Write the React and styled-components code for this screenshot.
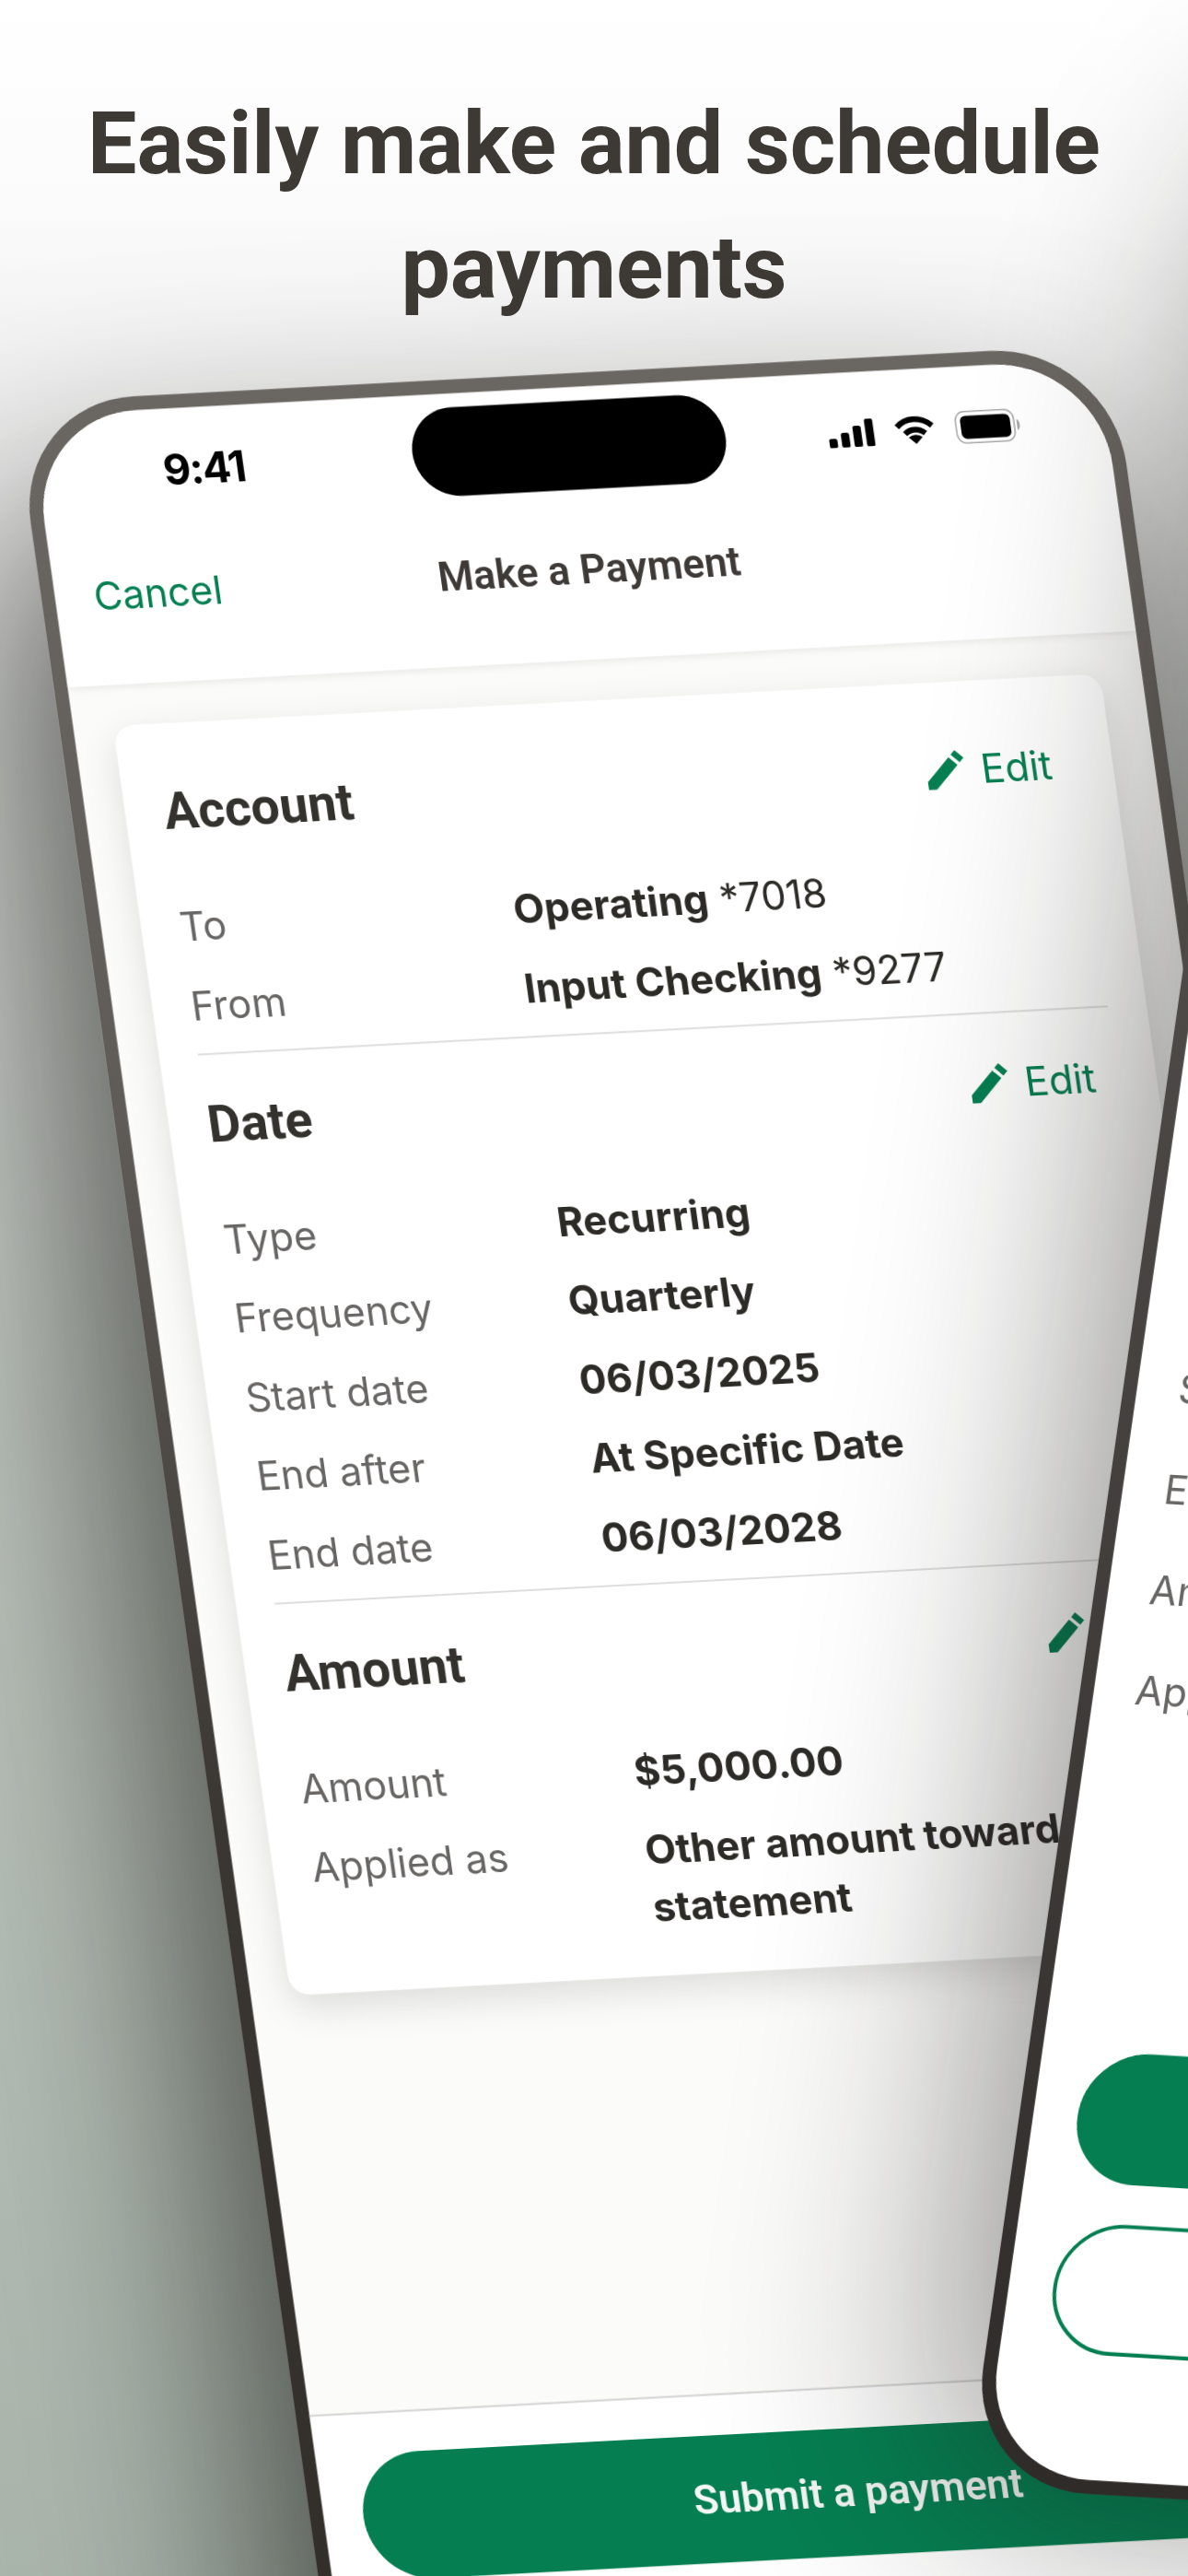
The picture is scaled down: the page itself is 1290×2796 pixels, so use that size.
import React from "react";
import styled, { createGlobalStyle } from "styled-components";

const GlobalStyle = createGlobalStyle`
  html, body {
    margin: 0;
    padding: 0;
    background: #fff;
  }
  * {
    box-sizing: border-box;
  }
`;

const green = "#057f52";
const sans = `Inter, "Noto Sans", sans-serif`;
const display = `Roboto, Inter, sans-serif`;

const Page = styled.div`
  position: relative;
  width: 1290px;
  height: 2796px;
  overflow: hidden;
  background: linear-gradient(180deg, #fff 0%, #fbfbfb 8%, #e6e7e6 22%, #bfc6bf 55%, #a9b4ab 100%);
  font-family: ${sans};
`;

const Title = styled.h1`
  margin: 0;
  height: 437px;
  padding: 88px 40px 0;
  text-align: center;
  font-family: ${display};
  font-size: 95px;
  line-height: 135px;
  font-weight: 700;
  color: #3d3a35;
`;

const Frame = styled.div`
  width: 1190px;
  height: 2580px;
  padding: 15px;
  border-radius: 130px;
  transform-origin: 0 0;
  display: flex;
  will-change: transform;
`;

const MainFrame = styled(Frame)`
  margin-left: 15px;
  transform: matrix(1, -0.053, 0.14, 1, 0, 0);
  background: linear-gradient(180deg, #6a6662 0%, #5f5b57 30%, #3a3632 60%, #302d29 100%);
  box-shadow: -45px 130px 240px rgba(15, 15, 10, 0.66);
`;

const SideFrame = styled(Frame)`
  position: absolute;
  left: 1418px;
  top: 119px;
  transform: matrix(1, 0.06, -0.143, 1, 0, 0);
  background: linear-gradient(180deg, #5e5a57 0%, #3e3a37 70%, #2e2b28 100%);
  box-shadow: -30px 10px 280px rgba(20, 18, 15, 0.48);
`;

const Screen = styled.div`
  position: relative;
  flex: 1;
  display: flex;
  flex-direction: column;
  border-radius: 116px;
  overflow: hidden;
  background: #fbfbfa;
`;

const Header = styled.header`
  height: 295px;
  flex: none;
  background: #fff;
  box-shadow: 0 2px 10px rgba(0, 0, 0, 0.1);
  z-index: 1;
`;

const StatusBar = styled.div`
  height: 132px;
  padding: 0 92px 0 136px;
  display: flex;
  align-items: center;
  justify-content: space-between;
`;

const Clock = styled.span`
  font-size: 46px;
  font-weight: 700;
  letter-spacing: -1.5px;
  color: #000;
`;

const Island = styled.div`
  position: absolute;
  top: 15px;
  left: 407px;
  width: 340px;
  height: 96px;
  border-radius: 48px;
  background: #000;
  z-index: 2;
`;

const StatusIcons = styled.div`
  display: flex;
  align-items: center;
  gap: 22px;
`;

const NavBar = styled.div`
  margin-top: 22px;
  height: 88px;
  padding: 0 42px;
  display: grid;
  grid-template-columns: 1fr auto 1fr;
  align-items: center;
`;

const NavLink = styled.span`
  font-size: 42.5px;
  color: ${green};
`;

const NavTitle = styled.span`
  font-family: ${display};
  font-size: 44px;
  font-weight: 600;
  color: #3d3a38;
`;

const Content = styled.main`
  flex: 1;
  padding: 44px 43px 0;
`;

const Card = styled.section`
  width: 1072px;
  padding: 65px 42px 50px;
  border-radius: 22px;
  background: #fff;
  box-shadow: 0 14px 40px rgba(0, 0, 0, 0.12);
`;

const Block = styled.div`
  padding: 45px 0 27px;
  border-bottom: 2px solid #dedede;

  &:first-child {
    padding-top: 0;
  }
  &:last-child {
    padding-bottom: 0;
    border-bottom: 0;
  }
`;

const BlockHead = styled.div`
  height: 60px;
  margin-bottom: 70px;
  display: flex;
  align-items: center;
  justify-content: space-between;
`;

const BlockTitle = styled.h2`
  margin: 0;
  font-family: ${display};
  font-size: 55px;
  font-weight: 700;
  color: #34322e;
`;

const EditLink = styled.span`
  display: flex;
  align-items: center;
  gap: 17px;
  margin-right: 24px;
  font-size: 43px;
  color: ${green};
`;

const Rows = styled.div`
  display: flex;
  flex-direction: column;
  gap: 35.5px;
`;

const Row = styled.div`
  display: grid;
  grid-template-columns: 362px 1fr;
  min-height: 50px;
  line-height: 50px;
`;

const Label = styled.span`
  font-size: 43px;
  color: #686664;
`;

const Value = styled.span`
  font-size: 43.5px;
  line-height: 62px;
  margin: -6px 0;
  font-weight: 700;
  color: #2d2b28;

  em {
    font-style: normal;
    font-weight: 400;
    font-size: 43px;
  }
`;

const Footer = styled.footer`
  flex: none;
  height: 380px;
  padding: 43px 43px 0;
  background: #fff;
  border-top: 2px solid #d2d2d2;
`;

const SubmitButton = styled.div`
  height: 138px;
  border-radius: 69px;
  background: ${green};
  display: flex;
  align-items: center;
  justify-content: center;
  font-family: ${display};
  font-size: 44px;
  font-weight: 600;
  color: #f4f7f5;
`;

const SideScreen = styled(Screen)`
  background: #fff;
  padding: 0 48px 135px;
  justify-content: flex-end;
`;

const SideRows = styled.div`
  display: flex;
  flex-direction: column;
  gap: 59px;
  margin: 0 0 324px -3px;
`;

const SideLabel = styled(Label)`
  line-height: 50px;
`;

const Pill = styled.div`
  height: 142px;
  border-radius: 71px;
  margin-top: 43px;
  border: 4px solid ${green};
  background: ${(p) => (p.$filled ? green : "#fff")};
`;

const PencilIcon = () => (
  <svg width="42" height="42" viewBox="3 3 18 18" fill={green}>
    <path d="M3 17.25V21h3.75L17.81 9.94l-3.75-3.75L3 17.25zM15.2 5.05l3.75 3.75 2.05-2.05-3.75-3.75z" />
  </svg>
);

const SignalIcon = () => (
  <svg width="50" height="30" viewBox="0 0 50 30" fill="#000">
    <rect x="0" y="20" width="9" height="10" rx="2.5" />
    <rect x="13.5" y="14" width="9" height="16" rx="2.5" />
    <rect x="27" y="7" width="9" height="23" rx="2.5" />
    <rect x="40.5" y="0" width="9" height="30" rx="2.5" />
  </svg>
);

const WifiIcon = () => (
  <svg width="44" height="30" viewBox="0 0 44 30" fill="none" stroke="#000" strokeWidth="6">
    <path d="M3 11 A 27 27 0 0 1 41 11" />
    <path d="M11 19 A 16 16 0 0 1 33 19" />
    <path d="M22 30 L14.5 23 A 11 11 0 0 1 29.5 23 Z" fill="#000" stroke="none" />
  </svg>
);

const BatteryIcon = () => (
  <svg width="72" height="36" viewBox="0 0 72 36" fill="none">
    <rect x="1" y="1" width="63" height="34" rx="10" stroke="#a8a8a8" strokeWidth="1.5" />
    <rect x="6" y="5.5" width="54" height="25" rx="6" fill="#000" />
    <path d="M67 12 C 71 13 71 23 67 24 Z" fill="#a8a8a8" />
  </svg>
);

const accountRows = [
  ["To", "Operating", "*7018"],
  ["From", "Input Checking", "*9277"],
];

const dateRows = [
  ["Type", "Recurring"],
  ["Frequency", "Quarterly"],
  ["Start date", "06/03/2025"],
  ["End after", "At Specific Date"],
  ["End date", "06/03/2028"],
];

const amountRows = [
  ["Amount", "$5,000.00"],
  ["Applied as", "Other amount towards statement"],
];

const sideLabels = ["Start date", "End date", "Amount", "Applied as"];

const DetailBlock = ({ title, rows }) => (
  <Block>
    <BlockHead>
      <BlockTitle>{title}</BlockTitle>
      <EditLink>
        <PencilIcon />
        Edit
      </EditLink>
    </BlockHead>
    <Rows>
      {rows.map(([label, value, suffix]) => (
        <Row key={label}>
          <Label>{label}</Label>
          <Value>
            {value}
            {suffix && <em> {suffix}</em>}
          </Value>
        </Row>
      ))}
    </Rows>
  </Block>
);

const App = () => (
  <Page>
    <GlobalStyle />
    <Title>
      Easily make and schedule
      <br />
      payments
    </Title>
    <MainFrame>
      <Screen>
        <Island />
        <Header>
          <StatusBar>
            <Clock>9:41</Clock>
            <StatusIcons>
              <SignalIcon />
              <WifiIcon />
              <BatteryIcon />
            </StatusIcons>
          </StatusBar>
          <NavBar>
            <NavLink>Cancel</NavLink>
            <NavTitle>Make a Payment</NavTitle>
          </NavBar>
        </Header>
        <Content>
          <Card>
            <DetailBlock title="Account" rows={accountRows} />
            <DetailBlock title="Date" rows={dateRows} />
            <DetailBlock title="Amount" rows={amountRows} />
          </Card>
        </Content>
        <Footer>
          <SubmitButton>Submit a payment</SubmitButton>
        </Footer>
      </Screen>
    </MainFrame>
    <SideFrame>
      <SideScreen>
        <SideRows>
          {sideLabels.map((label) => (
            <SideLabel key={label}>{label}</SideLabel>
          ))}
        </SideRows>
        <Pill $filled />
        <Pill />
      </SideScreen>
    </SideFrame>
  </Page>
);

export default App;
